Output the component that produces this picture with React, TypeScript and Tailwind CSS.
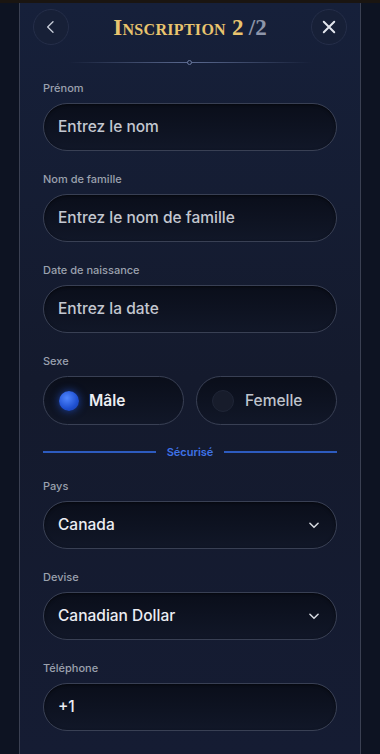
import React from "react";

const Label = ({ children }: { children: React.ReactNode }) => (
  <div className="h-4 text-[11px] leading-4 font-medium text-[#9ba1ae]">{children}</div>
);

const Field = ({ children, right, strong }: { children: React.ReactNode; right?: React.ReactNode; strong?: boolean }) => (
  <div className="mt-[7px] h-[48px] rounded-full border-[1.5px] border-[#394054] bg-gradient-to-b from-[#0a0e1a] to-[#111728] flex items-center pl-[14px] pr-[15px] justify-between shadow-[inset_0_1px_3px_rgba(0,0,0,0.5)]">
    <span className={`text-[15.5px] font-medium ${strong ? "text-[#eceef3]" : "text-[#c3c7d0]"}`}>{children}</span>
    {right}
  </div>
);

const Chevron = () => (
  <svg width="14" height="14" viewBox="0 0 24 24" fill="none" stroke="#d6d9e0" strokeWidth="2.6" strokeLinecap="round" strokeLinejoin="round">
    <path d="M5 9l7 7 7-7" />
  </svg>
);

export default function App() {
  return (
    <div className="w-[380px] h-[754px] bg-[#0d1322] overflow-hidden relative" style={{ fontFamily: "Inter, 'Noto Sans', sans-serif" }}>
      <div className="h-[3px] bg-[#1a1511]" />
      <div className="mx-[19px] h-[751px] border-x-[1.5px] border-[#3a4052] bg-gradient-to-b from-[#16203a] via-[#141a2d] to-[#151c33] flex flex-col">
        {/* header */}
        <div className="relative h-[68px] flex flex-col">
          <div className="flex items-center justify-between px-[13px] pt-[6px]">
            <div className="w-[36px] h-[36px] rounded-full border border-[#252e49] bg-[#172037] flex items-center justify-center">
              <svg width="16" height="16" viewBox="0 0 24 24" fill="none" stroke="#c7ccd8" strokeWidth="2" strokeLinecap="round" strokeLinejoin="round">
                <path d="M15 4l-8 8 8 8" />
              </svg>
            </div>
            <div className="flex items-baseline pt-[2px]" style={{ fontFamily: "'Liberation Serif', 'DejaVu Serif', serif" }}>
              <span className="text-[23px] font-bold text-[#e9c46e] tracking-[0.3px]" style={{ fontVariant: "small-caps" }}>Inscription 2</span>
              <span className="text-[23px] font-bold text-[#8e96aa] ml-[5px]">/2</span>
            </div>
            <div className="w-[36px] h-[36px] rounded-full border border-[#252e49] bg-[#172037] flex items-center justify-center">
              <svg width="18" height="18" viewBox="0 0 24 24" fill="none" stroke="#e3e6ee" strokeWidth="2.6" strokeLinecap="round">
                <path d="M5 5l14 14M19 5L5 19" />
              </svg>
            </div>
          </div>
          <div className="mt-auto mb-[8px] flex items-center justify-center">
            <div className="w-[244px] h-[1px] bg-gradient-to-r from-transparent via-[#5b6a90] to-transparent relative">
              <div className="absolute left-1/2 top-[-2px] -ml-[3px] w-[5px] h-[5px] rounded-full border border-[#6b7aa0] bg-[#16203a]" />
            </div>
          </div>
        </div>

        <div className="px-[23px] pt-[9px]">
          <Label>Prénom</Label>
          <Field>Entrez le nom</Field>

          <div className="mt-[20px]">
            <Label>Nom de famille</Label>
            <Field>Entrez le nom de famille</Field>
          </div>

          <div className="mt-[20px]">
            <Label>Date de naissance</Label>
            <Field>Entrez la date</Field>
          </div>

          <div className="mt-[20px]">
            <Label>Sexe</Label>
            <div className="mt-[7px] grid grid-cols-2 gap-[12px]">
              <div className="h-[49px] rounded-full border-[1.5px] border-[#394054] bg-gradient-to-b from-[#0a0e1a] to-[#111728] flex items-center pl-[15px] gap-[10px]">
                <div className="w-[20px] h-[20px] rounded-full bg-[radial-gradient(circle_at_40%_35%,#4f86ff,#1e4fd0_60%,#173a9c)] shadow-[0_0_8px_rgba(40,100,255,0.6)]" />
                <span className="text-[15.5px] font-semibold text-[#eceef3]">Mâle</span>
              </div>
              <div className="h-[49px] rounded-full border-[1.5px] border-[#394054] bg-gradient-to-b from-[#0a0e1a] to-[#111728] flex items-center pl-[15px] gap-[11px]">
                <div className="w-[22px] h-[22px] rounded-full bg-[#171c2b] border border-[#1f2536]" />
                <span className="text-[15.5px] font-medium text-[#bfc3cc]">Femelle</span>
              </div>
            </div>
          </div>

          <div className="mt-[19px] flex items-center h-[16px]">
            <div className="flex-1 h-[1.5px] bg-[#2d5bbf]" />
            <span className="px-[11px] text-[11px] font-semibold text-[#3f72e6]">Sécurisé</span>
            <div className="flex-1 h-[1.5px] bg-[#2d5bbf]" />
          </div>

          <div className="mt-[18px]">
            <Label>Pays</Label>
            <Field strong right={<Chevron />}>Canada</Field>
          </div>

          <div className="mt-[20px]">
            <Label>Devise</Label>
            <Field strong right={<Chevron />}>Canadian Dollar</Field>
          </div>

          <div className="mt-[20px]">
            <Label>Téléphone</Label>
            <Field strong>+1</Field>
          </div>
        </div>
      </div>
    </div>
  );
}
